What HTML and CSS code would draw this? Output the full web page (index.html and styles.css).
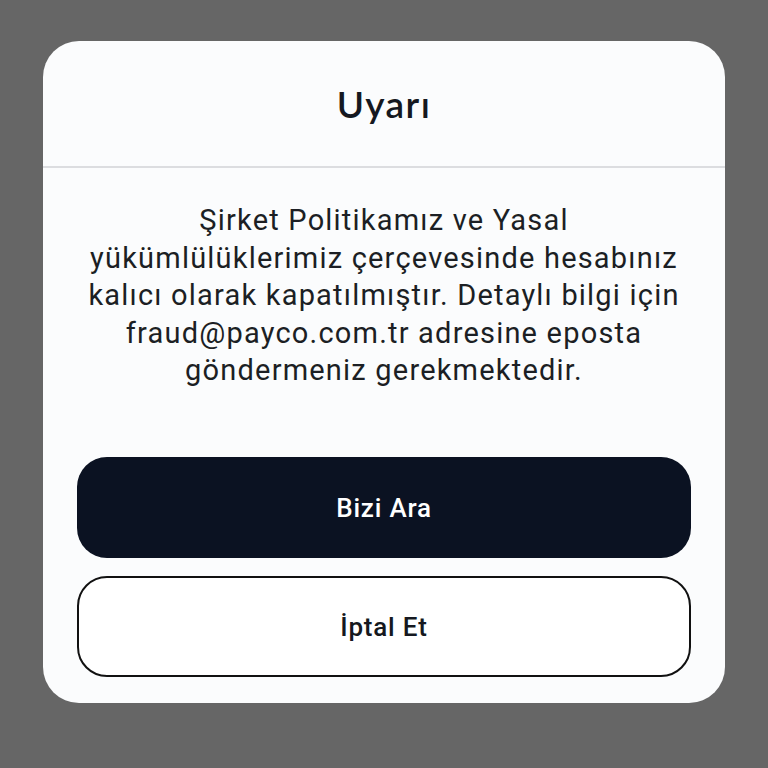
FILE: index.html
```html
<!DOCTYPE html>
<html lang="tr">

<head>
    <meta charset="UTF-8">
    <meta name="viewport" content="width=device-width, initial-scale=1.0">
    <title>Uyarı</title>
    <link rel="stylesheet" href="styles.css">
</head>

<body>
    <!-- Alert dialog -->
    <div class="dialog">
        <div class="dialog-header">
            <h1>Uyarı</h1>
        </div>
        <p class="dialog-message">
            Şirket Politikamız ve Yasal<br>
            yükümlülüklerimiz çerçevesinde hesabınız kalıcı olarak kapatılmıştır.
            Detaylı bilgi için fraud@payco.com.tr adresine eposta göndermeniz gerekmektedir.
        </p>
        <div class="dialog-actions">
            <button class="btn btn-primary">Bizi Ara</button>
            <button class="btn btn-outline">İptal Et</button>
        </div>
    </div>
</body>

</html>
```

FILE: styles.css
```css
/* Page backdrop */
body {
    margin: 0;
    padding: 41px 43px;
    background-color: #666666;
    font-family: 'Roboto', 'Liberation Sans', sans-serif;
}

/* Dialog card */
.dialog {
    width: 682px;
    height: 662px;
    box-sizing: border-box;
    background-color: #fbfcfd;
    border-radius: 36px;
    display: flex;
    flex-direction: column;
}

.dialog-header {
    height: 125px;
    border-bottom: 2px solid #dcdde0;
    display: flex;
    align-items: center;
    justify-content: center;
}

.dialog-header h1 {
    margin: 0;
    font-family: 'Lato', 'Inter', sans-serif;
    font-weight: 600;
    font-size: 37px;
    color: #151820;
    letter-spacing: 1.4px;
}

/* Message text */
.dialog-message {
    margin: 34px 28px 0;
    text-align: center;
    font-size: 29px;
    line-height: 37.5px;
    letter-spacing: 1.2px;
    color: #1c1f24;
}

/* Buttons */
.dialog-actions {
    margin-top: auto;
    padding: 0 34px 26px;
    display: flex;
    flex-direction: column;
    gap: 18px;
}

.btn {
    height: 101px;
    border-radius: 30px;
    font-family: 'Roboto', sans-serif;
    font-weight: 500;
    font-size: 26px;
    letter-spacing: 0.8px;
    cursor: pointer;
}

.btn-primary {
    background-color: #0b1222;
    color: #ffffff;
    border: none;
}

.btn-outline {
    background-color: #ffffff;
    color: #151820;
    border: 2px solid #111111;
}
```
